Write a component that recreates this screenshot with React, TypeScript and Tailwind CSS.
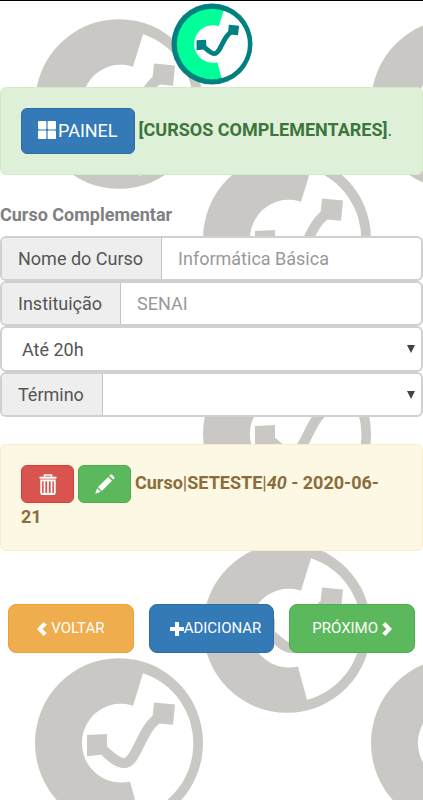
import type { ReactNode } from "react";

const WEDGE = "M24 -69 A73 73 0 0 1 20 71 L11 38 A39 39 0 1 1 14 -37 Z";
const LEFT_NODE = "M-32 -8 L-12 -9 L-12 11 L-32 13 Z";
const RIGHT_NODE = "M35 -40 L56 -38 L54 -18 L33 -20 Z";
const LINK = "M-17 6 C-9 12 -3 20 5 20 C18 20 22 -15 40 -25";

function Emblem({ ring, body }: { ring: string; body: string }) {
  return (
    <g>
      <circle r="84" fill={ring} />
      <circle r="73" fill={body} />
      <path d={WEDGE} fill="#fff" />
      <path d={LEFT_NODE} fill={ring} />
      <path d={RIGHT_NODE} fill={ring} />
      <path d={LINK} fill="none" stroke={ring} strokeWidth="10" />
    </g>
  );
}

const WATERMARKS = [
  [119, 104],
  [455, 104],
  [287, 239],
  [287, 434],
  [287, 628],
  [119, 743],
  [455, 743],
];

function Watermark() {
  return (
    <svg className="pointer-events-none absolute inset-0 -z-10 h-full w-full" aria-hidden="true">
      {WATERMARKS.map(([x, y]) => (
        <g key={`${x}-${y}`} transform={`translate(${x} ${y}) scale(1 1.01)`}>
          <Emblem ring="#c9c8c4" body="#c9c8c4" />
        </g>
      ))}
    </svg>
  );
}

function GridIcon() {
  return (
    <svg className="size-[18px] shrink-0" viewBox="0 0 18 18" fill="currentColor" aria-hidden="true">
      <rect x="0" y="0" width="8.4" height="8.4" rx="0.8" />
      <rect x="9.6" y="0" width="8.4" height="8.4" rx="0.8" />
      <rect x="0" y="9.6" width="8.4" height="8.4" rx="0.8" />
      <rect x="9.6" y="9.6" width="8.4" height="8.4" rx="0.8" />
    </svg>
  );
}

function TrashIcon() {
  return (
    <svg className="h-[21px] w-[18px]" viewBox="0 0 18 21" fill="none" stroke="currentColor" aria-hidden="true">
      <path d="M5.5 3 V1 H12.5 V3" strokeWidth="1.6" />
      <path d="M0.5 3.7 H17.5" strokeWidth="2" />
      <path d="M2.2 6.3 V19 Q2.2 20 3.2 20 H14.8 Q15.8 20 15.8 19 V6.3 Z" strokeWidth="1.8" />
      <path d="M5.5 7 V19 M9 7 V19 M12.5 7 V19" strokeWidth="1.7" />
    </svg>
  );
}

function PencilIcon() {
  return (
    <svg className="size-5" viewBox="0 0 20 20" fill="currentColor" aria-hidden="true">
      <path d="M14.3 1.8 L15.4 0.7 Q16.2 0 17 0.7 L19.2 2.9 Q20 3.7 19.2 4.5 L18.1 5.6 Z" />
      <path d="M13.2 2.9 L17 6.7 L6.8 16.9 L3 13.1 Z" />
      <path d="M2.1 14.2 L5.8 17.8 L0.2 19.8 Z" />
    </svg>
  );
}

function PlusIcon() {
  return (
    <svg className="size-[14px] shrink-0" viewBox="0 0 14 14" fill="currentColor" aria-hidden="true">
      <path d="M5 0.6 Q5 0 5.6 0 H8.4 Q9 0 9 0.6 V5 H13.4 Q14 5 14 5.6 V8.4 Q14 9 13.4 9 H9 V13.4 Q9 14 8.4 14 H5.6 Q5 14 5 13.4 V9 H0.6 Q0 9 0 8.4 V5.6 Q0 5 0.6 5 H5 Z" />
    </svg>
  );
}

function ChevronIcon({ flip = false }: { flip?: boolean }) {
  return (
    <svg className="h-[14px] w-[10px] shrink-0" viewBox="0 0 10 14" fill="currentColor" aria-hidden="true">
      <path
        transform={flip ? "translate(10 0) scale(-1 1)" : undefined}
        d="M6.6 0 L9.8 2.8 L5.6 7 L9.8 11.2 L6.6 14 L0 7 Z"
      />
    </svg>
  );
}

function Row({ id, label, children }: { id: string; label: string; children: ReactNode }) {
  return (
    <div className="flex h-[45px] overflow-hidden rounded-md border-2 border-[#d0d0d0] bg-white">
      <label htmlFor={id} className="flex items-center border-r border-[#c4c4c4] bg-[#eeeeee] pr-[18px] pl-4">
        {label}
      </label>
      {children}
    </div>
  );
}

function Arrow() {
  return (
    <svg className="pointer-events-none absolute top-1/2 right-1.5 h-2 w-2 -translate-y-1/2" viewBox="0 0 8 8" fill="#444" aria-hidden="true">
      <path d="M0 0 H8 L4 8 Z" />
    </svg>
  );
}

export default function App() {
  return (
    <div className="relative isolate min-h-screen overflow-hidden bg-white font-[Roboto,sans-serif] text-[18px] leading-[27px] text-[#555555]">
      <Watermark />
      <header className="flex justify-center border-t border-black pt-0.5 pb-0.5">
        <svg className="size-[82px]" viewBox="-85 -85 170 170" role="img" aria-label="Logo">
          <Emblem ring="#008080" body="#00ff99" />
        </svg>
      </header>

      <main>
        <section className="flex h-[88px] items-center gap-1 rounded-md border border-[#d6e9c6] bg-[#dff0d8] px-5 text-[#3c763d]">
          <button type="button" className="flex h-[46px] shrink-0 items-center gap-0.5 rounded-md border border-[#2e6da4] bg-[#337ab7] px-4 pb-0.5 text-white">
            <GridIcon />
            PAINEL
          </button>
          <p className="pb-1 whitespace-nowrap">
            <strong className="font-bold">[CURSOS COMPLEMENTARES]</strong>.
          </p>
        </section>

        <form className="pt-[26px]">
          <h2 className="pb-2 font-bold text-[#808080]">Curso Complementar</h2>
          <Row id="nome" label="Nome do Curso">
            <input id="nome" type="text" placeholder="Informática Básica" className="min-w-0 flex-1 px-4 outline-none placeholder:text-[#999999]" />
          </Row>
          <Row id="inst" label="Instituição">
            <input id="inst" type="text" placeholder="SENAI" className="min-w-0 flex-1 px-4 outline-none placeholder:text-[#999999]" />
          </Row>
          <div className="relative h-[46px] rounded-md border-2 border-[#d0d0d0] bg-white">
            <select aria-label="Carga horária" className="h-full w-full appearance-none px-5 outline-none">
              <option>Até 20h</option>
            </select>
            <Arrow />
          </div>
          <Row id="termino" label="Término">
            <div className="relative flex-1">
              <select id="termino" className="h-full w-full appearance-none px-4 outline-none">
                <option></option>
              </select>
              <Arrow />
            </div>
          </Row>
        </form>

        <section className="mt-[27px] h-[107px] rounded-md border border-[#faebcc] bg-[#fcf8e3] pt-5 pr-8 pl-5 text-[#8a6d3b]">
          <button type="button" aria-label="Excluir" className="mr-1 inline-flex h-[38px] w-[53px] items-center justify-center rounded-md border border-[#d43f3a] bg-[#d9534f] align-middle text-white">
            <TrashIcon />
          </button>
          <button type="button" aria-label="Editar" className="mr-1 inline-flex h-[38px] w-[53px] items-center justify-center rounded-md border border-[#4cae4c] bg-[#5cb85c] align-middle text-white">
            <PencilIcon />
          </button>
          <strong>Curso</strong>|<strong>SETESTE</strong>|
          <strong>
            <em>40</em> - 2020-06-21
          </strong>
        </section>

        <nav className="mt-[53px] grid grid-cols-3 gap-[15px] px-2 text-[15px] text-white">
          <button type="button" className="flex h-[49px] items-center justify-center gap-1 rounded-lg border border-[#eea236] bg-[#f0ad4e]">
            <ChevronIcon />
            VOLTAR
          </button>
          <button type="button" className="flex h-[49px] items-center justify-center rounded-lg border border-[#2e6da4] bg-[#337ab7] pl-2">
            <PlusIcon />
            ADICIONAR
          </button>
          <button type="button" className="flex h-[49px] items-center justify-center gap-1 rounded-lg border border-[#4cae4c] bg-[#5cb85c]">
            PRÓXIMO
            <ChevronIcon flip />
          </button>
        </nav>
      </main>
    </div>
  );
}
